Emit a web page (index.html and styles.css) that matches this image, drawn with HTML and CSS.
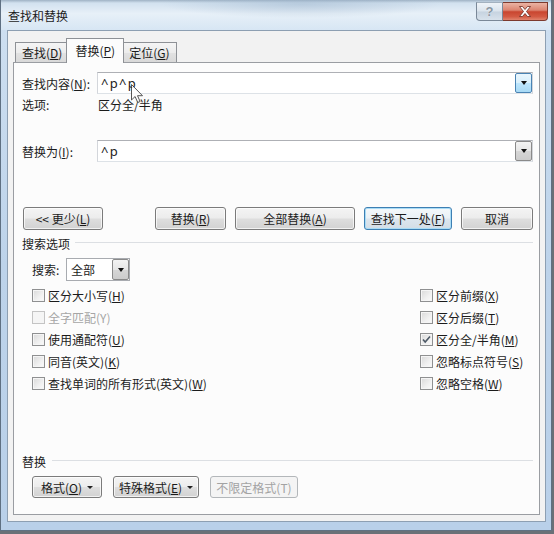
FILE: index.html
```html
<!DOCTYPE html>
<html lang="zh-CN">
<head>
<meta charset="utf-8">
<title>查找和替换</title>
<link rel="stylesheet" href="styles.css">
</head>
<body>
<div class="window">
  <div class="titlebar">
    <span class="title">查找和替换</span>
    <div class="caption">
      <div class="cbtn help">?</div>
      <div class="cbtn close">
        <svg width="14" height="11" viewBox="0 0 14 11"><path d="M1.5 0.5h3l2.5 3 2.5-3h3l-4 5 4 5h-3l-2.5-3-2.5 3h-3l4-5z" fill="#fff" stroke="#6b2a20" stroke-width="0.8" stroke-linejoin="round"/></svg>
      </div>
    </div>
  </div>
  <div class="client">
    <div class="tabs">
      <div class="tab">查找(<u>D</u>)</div>
      <div class="tab active">替换(<u>P</u>)</div>
      <div class="tab">定位(<u>G</u>)</div>
    </div>
    <div class="panel">
      <div class="field-row">
        <span class="lbl">查找内容(<u>N</u>):</span>
        <div class="combo">
          <span class="combo-text">^p^p</span>
          <span class="combo-btn hot"><i class="arrow"></i></span>
        </div>
      </div>
      <div class="opt-row">
        <span class="lbl">选项:</span>
        <span class="opt-val">区分全/半角</span>
      </div>
      <div class="field-row replace-row">
        <span class="lbl">替换为(<u>I</u>):</span>
        <div class="combo">
          <span class="combo-text">^p</span>
          <span class="combo-btn"><i class="arrow"></i></span>
        </div>
      </div>
      <div class="btn-row">
        <div class="btn less">&lt;&lt; 更少(<u>L</u>)</div>
        <div class="btn-group">
          <div class="btn w71">替换(<u>R</u>)</div>
          <div class="btn w120">全部替换(<u>A</u>)</div>
          <div class="btn w88 default">查找下一处(<u>F</u>)</div>
          <div class="btn w72">取消</div>
        </div>
      </div>
      <div class="group-title search-title">
        <span>搜索选项</span><span class="rule"></span>
      </div>
      <div class="search-row">
        <span class="search-lbl">搜索:</span>
        <div class="select">
          <span class="select-text">全部</span>
          <span class="combo-btn"><i class="arrow"></i></span>
        </div>
      </div>
      <div class="checks">
        <div class="chk"><span class="cb"></span><span>区分大小写(<u>H</u>)</span></div>
        <div class="chk"><span class="cb"></span><span>区分前缀(<u>X</u>)</span></div>
        <div class="chk disabled"><span class="cb"></span><span>全字匹配(Y)</span></div>
        <div class="chk"><span class="cb"></span><span>区分后缀(<u>T</u>)</span></div>
        <div class="chk"><span class="cb"></span><span>使用通配符(<u>U</u>)</span></div>
        <div class="chk"><span class="cb checked"><svg width="11" height="11" viewBox="0 0 11 11"><path d="M2 5.5l2.2 2.6L9 2.5" fill="none" stroke="#4d5966" stroke-width="1.6"/></svg></span><span>区分全/半角(<u>M</u>)</span></div>
        <div class="chk"><span class="cb"></span><span>同音(英文)(<u>K</u>)</span></div>
        <div class="chk"><span class="cb"></span><span>忽略标点符号(<u>S</u>)</span></div>
        <div class="chk"><span class="cb"></span><span>查找单词的所有形式(英文)(<u>W</u>)</span></div>
        <div class="chk"><span class="cb"></span><span>忽略空格(<u>W</u>)</span></div>
      </div>
      <div class="group-title replace-title">
        <span>替换</span><span class="rule"></span>
      </div>
      <div class="bottom-btns">
        <div class="btn w70">格式(<u>O</u>)<i class="arrow small"></i></div>
        <div class="btn w86">特殊格式(<u>E</u>)<i class="arrow small"></i></div>
        <div class="btn w88 disabled">不限定格式(T)</div>
      </div>
    </div>
  </div>
  <svg class="cursor" width="13" height="20" viewBox="0 0 13 20"><path d="M0.5 0.5v15.5l3.6-3.5 2.6 6 2.4-1-2.6-5.8h5z" fill="#fff" stroke="#3a3a3a" stroke-width="1" stroke-linejoin="round" opacity="0.85"/></svg>
</div>
</body>
</html>
```

FILE: styles.css
```css
html, body {
  margin: 0;
  padding: 0;
}

body {
  width: 554px;
  height: 534px;
  overflow: hidden;
  background: #6a7077;
  font-family: "Noto Sans CJK SC", "Microsoft YaHei", sans-serif;
  font-size: 12px;
  color: #1b1b1b;
}

u {
  text-decoration: underline;
  text-underline-offset: 1px;
}

.window {
  position: relative;
  width: 552px;
  height: 531px;
  box-sizing: border-box;
  border: 1px solid #5f7082;
  border-top: none;
  background: linear-gradient(180deg, #cfe0f1 0%, #bdd3ea 50%, #b9d0e9 100%);
  display: flex;
  flex-direction: column;
}

.titlebar {
  height: 30px;
  flex: none;
  display: flex;
  align-items: flex-start;
  background:
    radial-gradient(ellipse 140px 14px at 300px 4px, rgba(150, 175, 200, 0.45), transparent),
    linear-gradient(180deg, #9fb2c4 0, #d2e1ef 3px, #e7f0f8 45%, #d7e6f4 100%);
}

.title {
  margin: 8px 0 0 7px;
  line-height: 16px;
  color: #1c1c1c;
}

.caption {
  margin: 2px 3px 0 auto;
  display: flex;
}

.cbtn {
  height: 19px;
  box-sizing: border-box;
  display: flex;
  align-items: center;
  justify-content: center;
}

.help {
  width: 27px;
  border: 1px solid #7a8898;
  border-top-color: #a3b1bf;
  border-radius: 0 0 0 4px;
  background: linear-gradient(180deg, #eef3f8 0%, #dbe4ed 48%, #c6d3e0 52%, #d8e2ec 100%);
  font-family: "Liberation Sans", sans-serif;
  font-weight: bold;
  font-size: 13px;
  color: #8a96a2;
  text-shadow: 0 0 1px #fff;
}

.close {
  width: 45px;
  border: 1px solid #7d3a2e;
  border-left: none;
  border-radius: 0 0 4px 0;
  background: linear-gradient(180deg, #eab3a4 0%, #dc8571 42%, #c94630 52%, #d35a43 80%, #e0846e 100%);
}

.client {
  margin: 0 5px 0 6px;
  height: 492px;
  box-sizing: border-box;
  border: 1px solid #8d9fb2;
  background: #f2f2f2;
  padding: 7px 5px 0;
}

.tabs {
  display: flex;
  align-items: flex-end;
  height: 25px;
  margin: 0 0 -1px 2px;
  position: relative;
  z-index: 1;
}

.tab {
  height: 20px;
  margin-bottom: 1px;
  padding: 0 6px;
  box-sizing: border-box;
  border: 1px solid #8e9196;
  border-bottom: none;
  background: linear-gradient(180deg, #f5f5f5 0%, #ececec 50%, #e2e2e2 51%, #d9d9d9 100%);
  line-height: 19px;
  margin-right: -1px;
}

.tab.active {
  position: relative;
  z-index: 2;
  height: 25px;
  margin: 0 -2px 0 -2px;
  padding: 0 8px;
  background: #fcfcfc;
  line-height: 23px;
}

.panel {
  height: 453px;
  box-sizing: border-box;
  border: 1px solid #9a9da2;
  background: #fcfcfc;
  padding: 9px 6px 0 8px;
}

.field-row {
  display: flex;
  align-items: center;
  height: 22px;
}

.replace-row {
  margin-top: 25px;
}

.lbl {
  width: 75px;
  flex: none;
}

.combo {
  width: 436px;
  height: 22px;
  box-sizing: border-box;
  border: 1px solid;
  border-color: #aeb0b5 #d3d6db #dde2e7 #d3d6db;
  background: #fff;
  display: flex;
  align-items: center;
}

.combo-text {
  padding-left: 3px;
  font-family: "Noto Sans", sans-serif;
  font-size: 13px;
  letter-spacing: 1.3px;
  color: #222;
}

.combo-btn {
  margin-left: auto;
  width: 17px;
  height: 20px;
  box-sizing: border-box;
  border: 1px solid #8a8a8a;
  border-radius: 2px;
  background: linear-gradient(180deg, #f3f3f3 0%, #e6e6e6 50%, #d6d6d6 51%, #cccccc 100%);
  display: flex;
  align-items: center;
  justify-content: center;
}

.combo-btn.hot {
  border-color: #4a83b3;
  background: linear-gradient(180deg, #eaf6fd 0%, #d9f0fc 50%, #bee6fd 51%, #a7d9f5 100%);
}

.arrow {
  display: block;
  width: 0;
  height: 0;
  border-top: 4px solid #111;
  border-left: 3.5px solid transparent;
  border-right: 3.5px solid transparent;
}

.arrow.small {
  margin-left: 5px;
  border-top-width: 3px;
  border-left-width: 3px;
  border-right-width: 3px;
  border-top-color: #222;
}

.opt-row {
  display: flex;
  align-items: center;
  height: 21px;
}

.opt-val {
  padding-left: 1px;
}

.btn-row {
  display: flex;
  margin-top: 45px;
  padding-left: 1px;
}

.btn-group {
  display: flex;
  gap: 9px;
  margin-left: auto;
}

.btn {
  height: 23px;
  box-sizing: border-box;
  border: 1px solid #7b7b7b;
  border-radius: 3px;
  background: linear-gradient(180deg, #f4f4f4 0%, #ececec 48%, #dedede 52%, #d2d2d2 100%);
  box-shadow: inset 0 0 0 1px rgba(255, 255, 255, 0.7);
  display: flex;
  align-items: center;
  justify-content: center;
  color: #1b1b1b;
  white-space: nowrap;
}

.btn.less { width: 80px; }
.w70 { width: 70px; }
.w71 { width: 71px; }
.w72 { width: 72px; }
.w86 { width: 86px; }
.w88 { width: 88px; }
.w120 { width: 120px; }

.btn.default {
  border-color: #3d7fb3;
  box-shadow: inset 0 0 0 1px #a9dcf6;
  background: linear-gradient(180deg, #f4f8fb 0%, #eaf1f6 48%, #dde6ee 52%, #d3dde6 100%);
}

.btn.disabled {
  border-color: #b3b7ba;
  background: #f4f4f4;
  box-shadow: none;
  color: #a3a3a3;
}

.group-title {
  display: flex;
  align-items: center;
  height: 14px;
  margin-top: 6px;
}

.rule {
  flex: 1;
  height: 1px;
  margin: -2px 0 0 5px;
  background: #dcdfe3;
}

.replace-title {
  margin-top: 60px;
}

.replace-title .rule {
  margin-left: 6px;
}

.search-row {
  display: flex;
  align-items: center;
  height: 23px;
  margin-top: 8px;
  padding-left: 10px;
}

.search-lbl {
  width: 34px;
  flex: none;
}

.select {
  width: 64px;
  height: 23px;
  box-sizing: border-box;
  border: 1px solid #a8abb0;
  background: #fff;
  display: flex;
  align-items: center;
}

.select-text {
  padding-left: 4px;
}

.select .combo-btn {
  height: 21px;
}

.checks {
  display: grid;
  grid-template-columns: 388px auto;
  grid-auto-rows: 22px;
  margin-top: 3px;
  padding-left: 10px;
}

.chk {
  display: flex;
  align-items: center;
  gap: 3px;
}

.cb {
  width: 13px;
  height: 13px;
  flex: none;
  box-sizing: border-box;
  border: 1px solid #8f9091;
  background: linear-gradient(135deg, #d9d9d9 0%, #f0f0f0 60%, #fbfbfb 100%);
  box-shadow: inset 0 0 0 1px #f5f5f5;
  display: flex;
  align-items: center;
  justify-content: center;
}

.chk.disabled {
  color: #a6a6a6;
}

.chk.disabled .cb {
  border-color: #c4c4c4;
  background: #f5f5f5;
}

.bottom-btns {
  display: flex;
  gap: 11px;
  margin-top: 8px;
  padding-left: 10px;
}

.bottom-btns .btn {
  height: 22px;
}

.cursor {
  position: absolute;
  left: 130px;
  top: 84px;
}
```
